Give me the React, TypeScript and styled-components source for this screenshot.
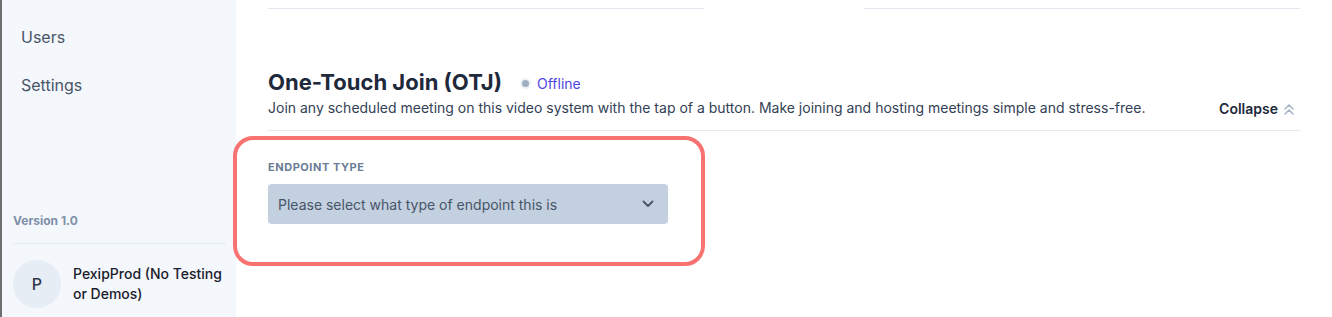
import React from "react";
import styled, { createGlobalStyle } from "styled-components";

const GlobalStyle = createGlobalStyle`
  * { box-sizing: border-box; }
  html, body { margin: 0; padding: 0; background: #ffffff; }
  body { font-family: Inter, "Noto Sans", Arial, sans-serif; -webkit-font-smoothing: antialiased; }
`;

const Page = styled.div`
  display: flex;
  height: 317px;
  overflow: hidden;
`;

const Sidebar = styled.aside`
  width: 236px;
  flex-shrink: 0;
  background: #f4f7fb;
  border-left: 2px solid #6e6e6e;
  display: flex;
  flex-direction: column;
  justify-content: space-between;
`;

const Nav = styled.nav`
  display: flex;
  flex-direction: column;
  padding: 25px 0 0 19px;
  gap: 24px;
`;

const NavItem = styled.a`
  font-size: 16px;
  line-height: 24px;
  color: #4a5568;
  text-decoration: none;
`;

const SideFooter = styled.div`
  padding: 0 10px 9px 11px;
  display: flex;
  flex-direction: column;
`;

const Version = styled.div`
  font-size: 12px;
  font-weight: 700;
  line-height: 16px;
  color: #7f8fa8;
  padding-bottom: 14px;
  border-bottom: 1px solid #e3e9f1;
`;

const Account = styled.div`
  display: flex;
  align-items: center;
  gap: 12px;
  padding-top: 16px;
`;

const Avatar = styled.div`
  width: 48px;
  height: 48px;
  border-radius: 50%;
  background: #e7edf5;
  color: #2d3748;
  font-size: 16px;
  font-weight: 500;
  display: flex;
  align-items: center;
  justify-content: center;
  flex-shrink: 0;
`;

const AccountName = styled.div`
  font-size: 14px;
  font-weight: 500;
  line-height: 20px;
  color: #1a202c;
`;

const Main = styled.main`
  flex: 1;
  padding: 0 32px;
  display: flex;
  flex-direction: column;
`;

const TopCards = styled.div`
  display: grid;
  grid-template-columns: 1fr 1fr;
  column-gap: 160px;
`;

const TopCard = styled.div`
  height: 9px;
  border-bottom: 1px solid #e3e9f1;
`;

const Section = styled.section`
  margin-top: 59px;
  position: relative;
`;

const Header = styled.div`
  display: flex;
  align-items: flex-end;
  justify-content: space-between;
  padding-bottom: 12px;
  border-bottom: 1px solid #e3e9f1;
`;

const HeaderText = styled.div`
  display: flex;
  flex-direction: column;
  gap: 2px;
`;

const TitleRow = styled.div`
  display: flex;
  align-items: center;
  gap: 20px;
`;

const Title = styled.h2`
  margin: 0;
  font-size: 22px;
  line-height: 28px;
  font-weight: 700;
  color: #1e293b;
`;

const Status = styled.span`
  display: inline-flex;
  align-items: center;
  gap: 8px;
  font-size: 14px;
  color: #4f46e5;
  padding-top: 2px;
`;

const Dot = styled.span`
  width: 7px;
  height: 7px;
  border-radius: 50%;
  background: #a0aec0;
  box-shadow: 0 0 0 2px #eef1f6;
`;

const Description = styled.p`
  margin: 0;
  font-size: 14px;
  line-height: 20px;
  color: #334155;
`;

const CollapseButton = styled.button`
  border: none;
  background: none;
  padding: 0;
  margin: 0 4px 1px 0;
  display: inline-flex;
  align-items: center;
  gap: 4px;
  font-family: inherit;
  font-size: 14px;
  font-weight: 600;
  color: #1e293b;
  cursor: pointer;
`;

const Body = styled.div`
  position: relative;
  padding-top: 28px;
  width: 400px;
`;

const Highlight = styled.div`
  position: absolute;
  left: -35px;
  top: 5px;
  width: 472px;
  height: 130px;
  border: 4.5px solid #f87272;
  border-radius: 20px;
  pointer-events: none;
`;

const Label = styled.label`
  display: block;
  font-size: 11px;
  line-height: 16px;
  font-weight: 700;
  letter-spacing: 0.05em;
  text-transform: uppercase;
  color: #6b7c96;
  margin-bottom: 9px;
`;

const Select = styled.div`
  height: 40px;
  border-radius: 4px;
  background: #c3d0df;
  display: flex;
  align-items: center;
  justify-content: space-between;
  padding: 0 14px 0 10px;
  font-size: 14px;
  color: #475569;
`;

const DoubleChevron = () => (
  <svg width="14" height="14" viewBox="0 0 14 14" fill="none" stroke="#a7b4c6" strokeWidth="1.6" strokeLinecap="round" strokeLinejoin="round">
    <path d="M3 7 L7 3 L11 7" />
    <path d="M3 12 L7 8 L11 12" />
  </svg>
);

const Chevron = () => (
  <svg width="12" height="8" viewBox="0 0 12 8" fill="none" stroke="#4a5568" strokeWidth="1.8" strokeLinecap="round" strokeLinejoin="round">
    <path d="M1.5 1.5 L6 6 L10.5 1.5" />
  </svg>
);

export default function App() {
  return (
    <>
      <GlobalStyle />
      <Page>
        <Sidebar>
          <Nav>
            <NavItem>Users</NavItem>
            <NavItem>Settings</NavItem>
          </Nav>
          <SideFooter>
            <Version>Version 1.0</Version>
            <Account>
              <Avatar>P</Avatar>
              <AccountName>PexipProd (No Testing or Demos)</AccountName>
            </Account>
          </SideFooter>
        </Sidebar>
        <Main>
          <TopCards>
            <TopCard />
            <TopCard />
          </TopCards>
          <Section>
            <Header>
              <HeaderText>
                <TitleRow>
                  <Title>One-Touch Join (OTJ)</Title>
                  <Status>
                    <Dot />
                    Offline
                  </Status>
                </TitleRow>
                <Description>
                  Join any scheduled meeting on this video system with the tap of a button. Make joining and hosting meetings simple and stress-free.
                </Description>
              </HeaderText>
              <CollapseButton>
                Collapse
                <DoubleChevron />
              </CollapseButton>
            </Header>
            <Body>
              <Highlight />
              <Label>Endpoint Type</Label>
              <Select>
                <span>Please select what type of endpoint this is</span>
                <Chevron />
              </Select>
            </Body>
          </Section>
        </Main>
      </Page>
    </>
  );
}
